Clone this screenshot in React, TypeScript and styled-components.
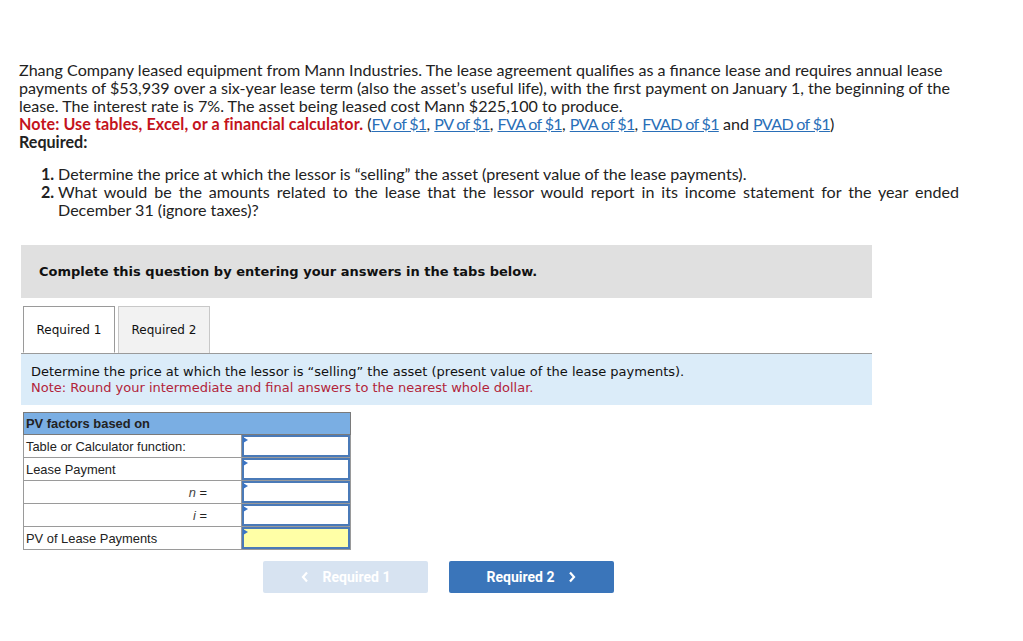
import React from 'react'
import styled, { createGlobalStyle } from 'styled-components'

const GlobalStyle = createGlobalStyle`
    body {
        margin: 0;
        background: #ffffff;
        font-family: Lato, "Open Sans", sans-serif;
        color: #222222;
    }
`

const Page = styled.div`
    padding: 61px 0 0 19px;
    width: 940px;
`

const Para = styled.p`
    margin: 0;
    font-size: 16.1px;
    line-height: 18px;
`

const NoteText = styled.span`
    color: #c4141c;
    font-weight: bold;
    letter-spacing: 0.1px;
`

const RefLink = styled.a`
    color: #2a6fb8;
    text-decoration: underline;
    letter-spacing: -0.7px;
`

const List = styled.ol`
    margin: 14px 0 0 0;
    padding: 0 0 0 39px;
    font-size: 16.1px;
    line-height: 18px;
    text-align: justify;

    li::marker {
        font-weight: bold;
    }
`

const Question = styled.div`
    margin: 26px 0 0 2px;
    width: 851px;
`

const Banner = styled.div`
    background: #e0e0e0;
    height: 53px;
    padding: 0 18px;
    display: flex;
    align-items: center;
    font-family: "DejaVu Sans", Verdana, sans-serif;
    font-size: 13px;
    font-weight: bold;
    color: #111111;
`

const Tabs = styled.div`
    margin-top: 8px;
    padding-left: 2px;
    display: flex;
    gap: 3px;
    border-bottom: 1px solid #9a9a9a;
`

const Tab = styled.div<{ $active?: boolean }>`
    width: 92px;
    height: 47px;
    margin-bottom: ${(p) => (p.$active ? '-1px' : '0')};
    border: 1px solid ${(p) => (p.$active ? '#9a9a9a' : '#c8c8c8')};
    border-bottom: ${(p) => (p.$active ? '1px solid #ffffff' : 'none')};
    background: ${(p) => (p.$active ? '#ffffff' : '#f2f2f2')};
    display: flex;
    align-items: center;
    justify-content: center;
    font-family: "DejaVu Sans", Verdana, sans-serif;
    font-size: 12px;
    color: #111111;
    box-sizing: border-box;
`

const Info = styled.div`
    background: #dbecf9;
    padding: 10px 10px 9px;
    font-family: "DejaVu Sans", Verdana, sans-serif;
    font-size: 13px;
    line-height: 16px;
    color: #111111;
`

const InfoNote = styled.div`
    color: #b2243a;
`

const Factors = styled.table`
    margin: 7px 0 0 2px;
    width: 327px;
    table-layout: fixed;
    border-collapse: collapse;
    font-family: "Liberation Sans", Arial, sans-serif;
    font-size: 12.9px;
    color: #222222;
`

const HeadCell = styled.td`
    background: #7aaee3;
    border: 1px solid #7a7a7a;
    height: 21px;
    padding: 0 2px;
    font-weight: bold;
`

const LabelCol = styled.col`
    width: 218px;
`

const InputCol = styled.col`
    width: 109px;
`

const LabelCell = styled.td<{ $right?: boolean }>`
    height: 22px;
    padding: 0 2px;
    border: 1px solid #9a9a9a;
    text-align: ${(p) => (p.$right ? 'right' : 'left')};
    padding-right: ${(p) => (p.$right ? '34px' : '2px')};
    white-space: nowrap;
`

const Var = styled.span`
    font-style: italic;
    color: #444444;
`

const InputCell = styled.td`
    padding: 0;
    border: 1px solid #9a9a9a;
`

const Field = styled.div<{ $yellow?: boolean }>`
    position: relative;
    height: 18px;
    border: 2px solid #4a7ab8;
    background: ${(p) => (p.$yellow ? '#ffffa6' : '#ffffff')};
    box-sizing: content-box;

    &::before {
        content: '';
        position: absolute;
        left: -1px;
        top: 0;
        border-left: 5px solid #3a74c4;
        border-top: 3px solid transparent;
        border-bottom: 3px solid transparent;
    }
`

const Nav = styled.div`
    margin: 11px 0 0 242px;
    display: flex;
    gap: 21px;
`

const NavButton = styled.button<{ $disabled?: boolean }>`
    width: 165px;
    height: 32px;
    border: none;
    border-radius: 2px;
    background: ${(p) => (p.$disabled ? '#d7e3f1' : '#3a75ba')};
    color: #ffffff;
    font-family: Roboto, "Liberation Sans", sans-serif;
    font-weight: bold;
    font-size: 14px;
    display: flex;
    align-items: center;
    justify-content: center;
    gap: 14px;
    padding: 0;
`

const Chevron = ({ dir }: { dir: 'left' | 'right' }) => (
    <svg width="8" height="12" viewBox="0 0 8 12">
        <path
            d={dir === 'left' ? 'M6 1.5 L2 6 L6 10.5' : 'M2 1.5 L6 6 L2 10.5'}
            fill="none"
            stroke="#ffffff"
            strokeWidth="2.2"
        />
    </svg>
)

const links = ['FV of $1', 'PV of $1', 'FVA of $1', 'PVA of $1', 'FVAD of $1']

export default function App() {
    return (
        <>
            <GlobalStyle />
            <Page>
                <Para>
                    Zhang Company leased equipment from Mann Industries. The lease agreement qualifies as a
                    finance lease and requires annual lease payments of $53,939 over a six-year lease term
                    (also the asset’s useful life), with the first payment on January 1, the beginning of the
                    lease. The interest rate is 7%. The asset being leased cost Mann $225,100 to produce.
                </Para>
                <Para>
                    <NoteText>Note: Use tables, Excel, or a financial calculator.</NoteText> (
                    {links.map((l, i) => (
                        <React.Fragment key={l}>
                            <RefLink href="#">{l}</RefLink>
                            {i < links.length - 1 ? ', ' : ' '}
                        </React.Fragment>
                    ))}
                    and <RefLink href="#">PVAD of $1</RefLink>)
                </Para>
                <Para>
                    <b>Required:</b>
                </Para>
                <List>
                    <li>
                        Determine the price at which the lessor is “selling” the asset (present value of the
                        lease payments).
                    </li>
                    <li>
                        What would be the amounts related to the lease that the lessor would report in its
                        income statement for the year ended December 31 (ignore taxes)?
                    </li>
                </List>
                <Question>
                    <Banner>Complete this question by entering your answers in the tabs below.</Banner>
                    <Tabs>
                        <Tab $active>Required 1</Tab>
                        <Tab>Required 2</Tab>
                    </Tabs>
                    <Info>
                        Determine the price at which the lessor is “selling” the asset (present value of the
                        lease payments).
                        <InfoNote>Note: Round your intermediate and final answers to the nearest whole dollar.</InfoNote>
                    </Info>
                    <Factors>
                        <colgroup>
                            <LabelCol />
                            <InputCol />
                        </colgroup>
                        <tbody>
                            <tr>
                                <HeadCell colSpan={2}>PV factors based on</HeadCell>
                            </tr>
                            <tr>
                                <LabelCell>Table or Calculator function:</LabelCell>
                                <InputCell>
                                    <Field />
                                </InputCell>
                            </tr>
                            <tr>
                                <LabelCell>Lease Payment</LabelCell>
                                <InputCell>
                                    <Field />
                                </InputCell>
                            </tr>
                            <tr>
                                <LabelCell $right>
                                    <Var>n</Var> =
                                </LabelCell>
                                <InputCell>
                                    <Field />
                                </InputCell>
                            </tr>
                            <tr>
                                <LabelCell $right>
                                    <Var>i</Var> =
                                </LabelCell>
                                <InputCell>
                                    <Field />
                                </InputCell>
                            </tr>
                            <tr>
                                <LabelCell>PV of Lease Payments</LabelCell>
                                <InputCell>
                                    <Field $yellow />
                                </InputCell>
                            </tr>
                        </tbody>
                    </Factors>
                    <Nav>
                        <NavButton $disabled>
                            <Chevron dir="left" />
                            Required 1
                        </NavButton>
                        <NavButton>
                            Required 2
                            <Chevron dir="right" />
                        </NavButton>
                    </Nav>
                </Question>
            </Page>
        </>
    )
}
